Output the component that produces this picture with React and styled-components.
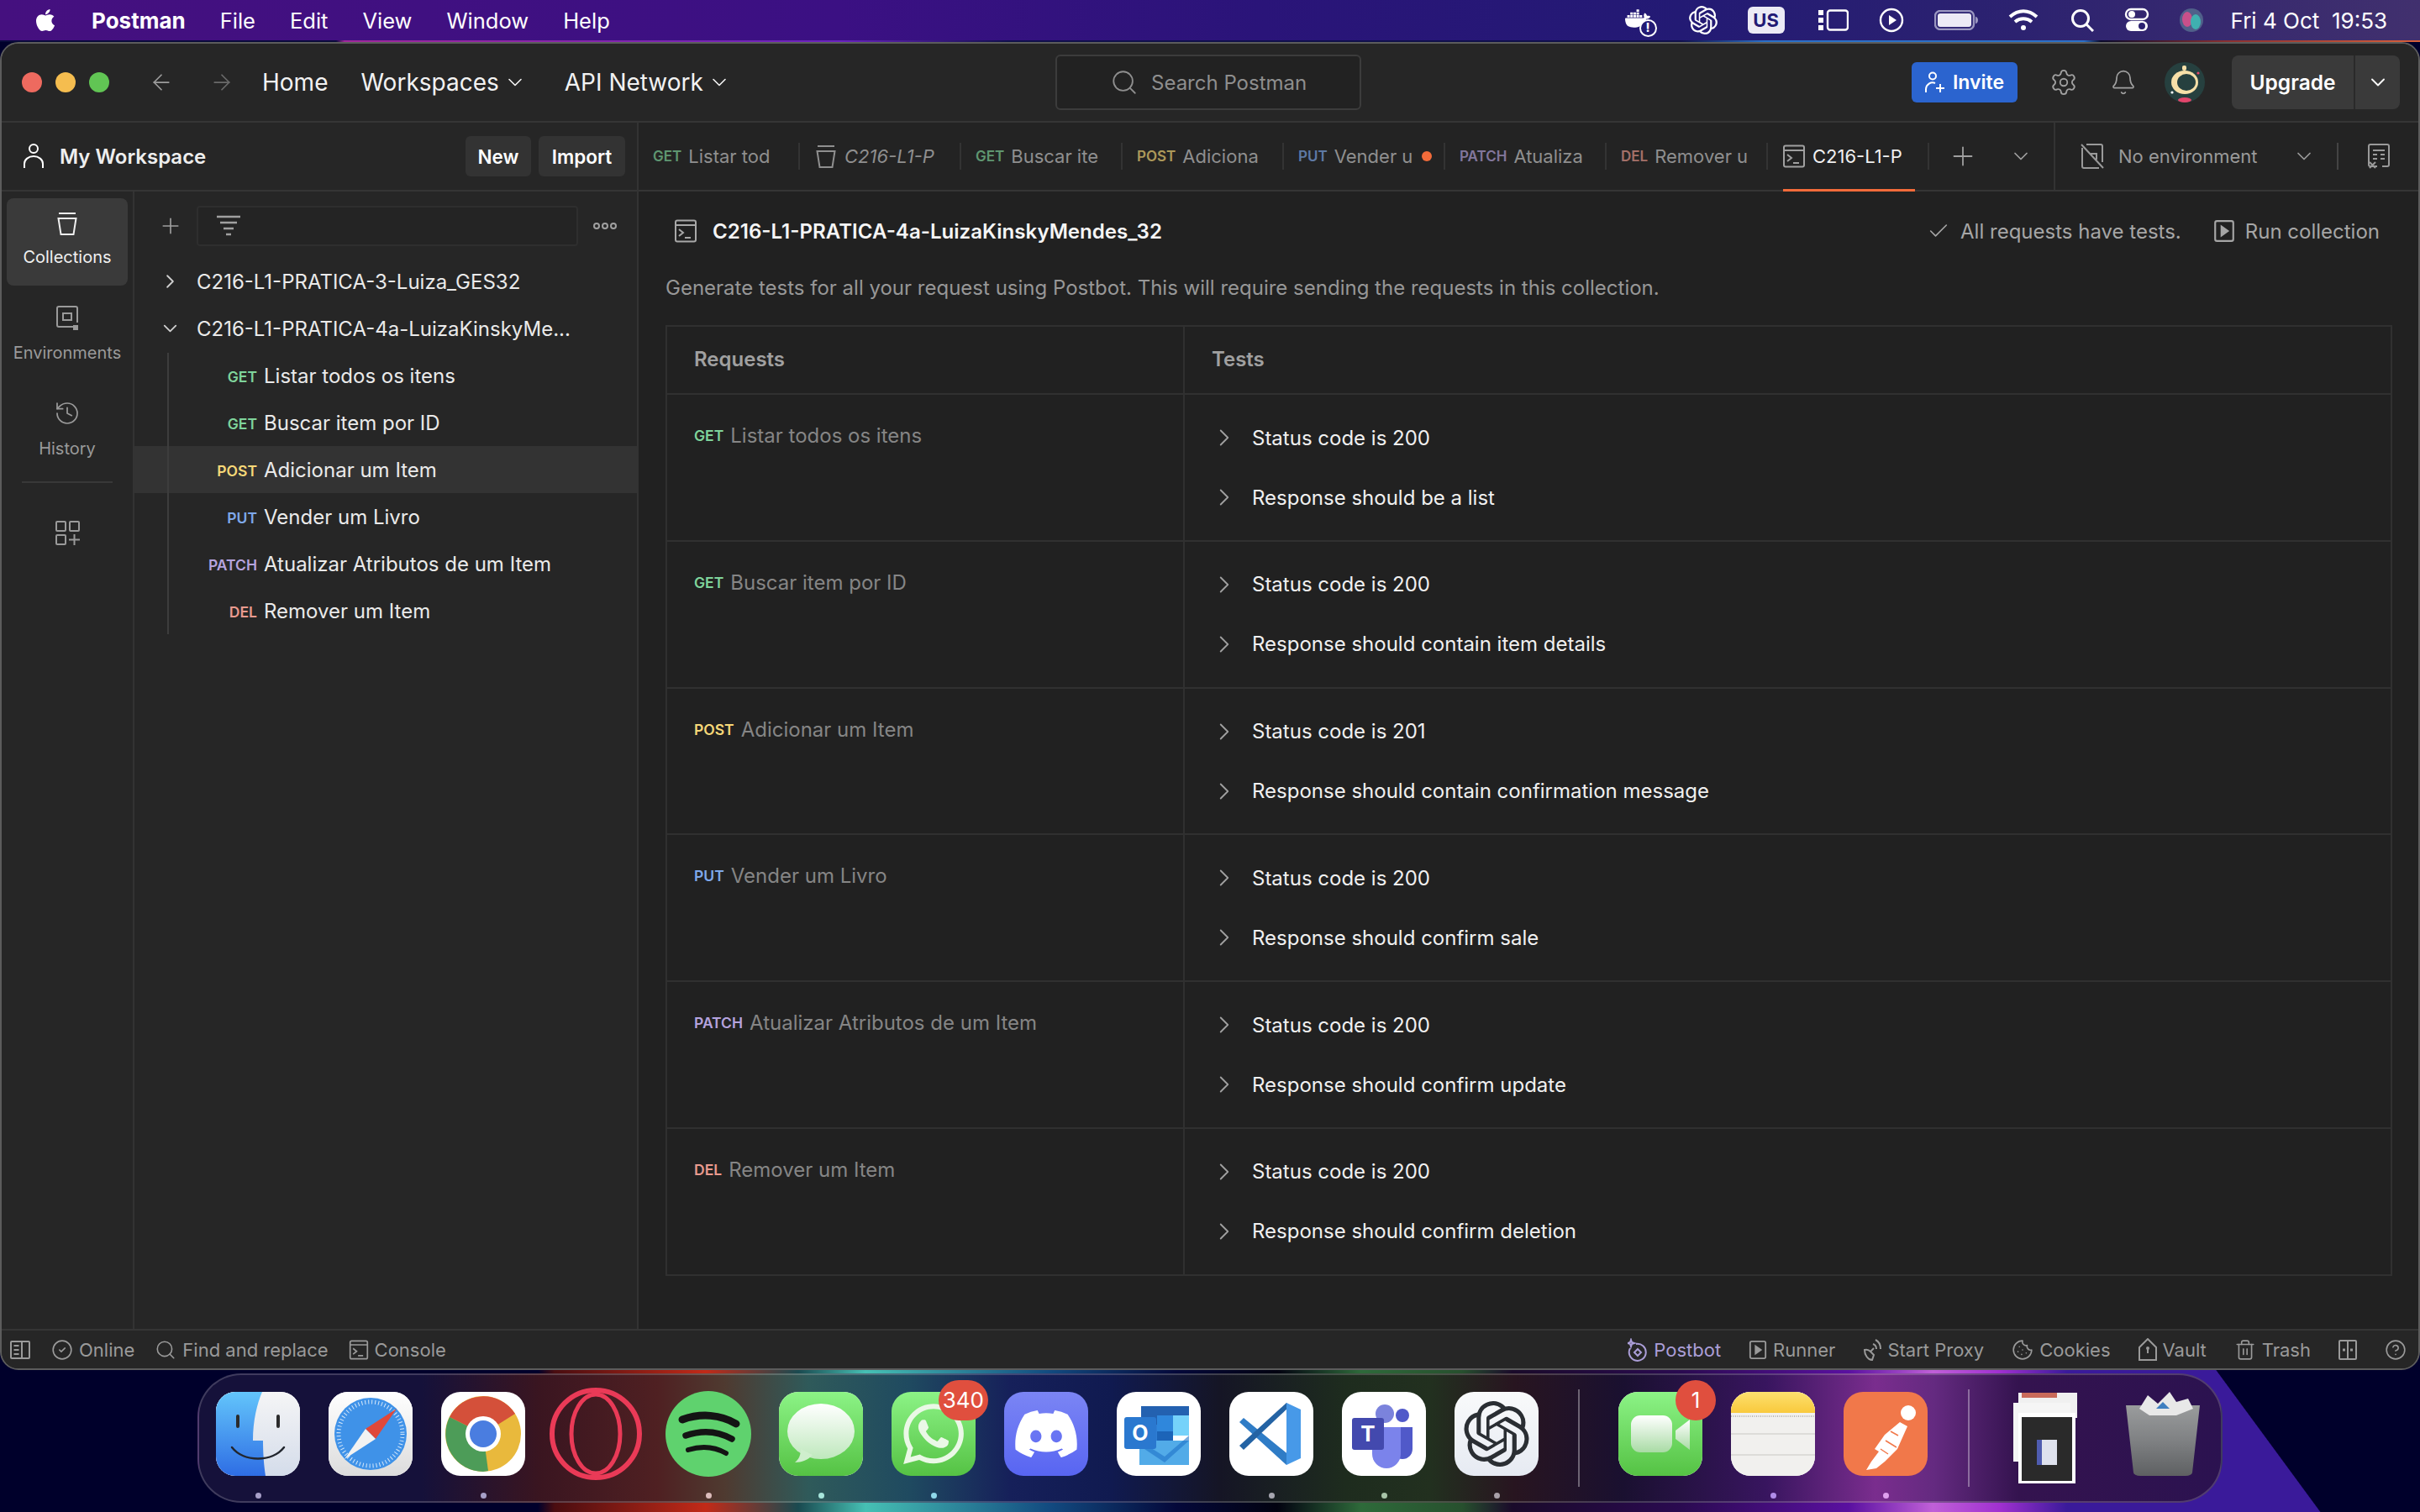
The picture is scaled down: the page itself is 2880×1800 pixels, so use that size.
import styled, { createGlobalStyle } from "styled-components";
import {
  ArrowLeft, ArrowRight, Bell, Check, ChevronDown, ChevronRight, CircleCheck, CircleHelp,
  Cookie, History, Plus, Search, Settings, Trash2,
} from "lucide-react";
import { FaApple, FaDiscord, FaWhatsapp } from "react-icons/fa";
import { SiDocker, SiOpenai } from "react-icons/si";

const GlobalStyle = createGlobalStyle`
  * { box-sizing: border-box; }
  html, body { margin: 0; padding: 0; }
  body { width: 2880px; height: 1800px; overflow: hidden; font-family: Inter, "Liberation Sans", sans-serif; }
`;

const Screen = styled.div`
  width: 2880px;
  height: 1800px;
  display: flex;
  flex-direction: column;
  overflow: hidden;
  background:
    linear-gradient(53.7deg, transparent 2225px, #00002b 2226px),
    linear-gradient(to right, #00002b 0, #00002b 640px, #4a0d10 660px, #c22a18 840px, #1a4a50 950px,
      #46c0b4 1030px, #124a80 1250px, #04083a 1400px, #020210 1520px, #2e6a3a 1620px, #27502e 1740px,
      #1a0a2a 1800px, #2a0a50 2000px, #5a10a0 2200px, #c060d8 2300px, #a030d0 2380px, #3a1a9a 2460px, #3a1a9a 2880px);
`;

const MenuBar = styled.div`
  height: 48px;
  flex: none;
  display: flex;
  align-items: center;
  padding: 0 39px 0 39px;
  color: #fff;
  font-size: 25.5px;
  background: linear-gradient(to right, #45107f 0, #3b1083 1000px, #2a1479 1500px, #231a74 2000px, #2c2270 2400px, #41306e 2880px);
`;

const MenuLeft = styled.div`
  display: flex;
  align-items: center;
  gap: 41px;
`;

const AppName = styled.span`
  font-weight: 700;
  margin-left: -1px;
  font-size: 26px;
`;

const MenuRight = styled.div`
  margin-left: auto;
  display: flex;
  align-items: center;
  height: 100%;
`;

const KeyboardBadge = styled.span`
  width: 44px;
  height: 32px;
  margin: 0 40px 0 36px;
  border-radius: 6px;
  background: #eceaf5;
  color: #231a74;
  font-size: 22px;
  font-weight: 700;
  display: flex;
  align-items: center;
  justify-content: center;
`;

const Clock = styled.span`
  margin-left: 33px;
  font-size: 26px;
  white-space: pre;
`;

const TrayIcon = styled.svg`
  flex: none;
  margin-left: ${(p) => p.$left || 0}px;
  fill: none;
  stroke: #fff;
  stroke-width: 2.4;
  display: block;
`;

const DockerBox = styled.div`
  position: relative;
  width: 38px;
  height: 34px;
  flex: none;
`;

const DockerAlert = styled.span`
  position: absolute;
  right: 0;
  bottom: -3px;
  width: 21px;
  height: 21px;
  border-radius: 50%;
  border: 2.5px solid #fff;
  background: #231a74;
  font-size: 14px;
  line-height: 16px;
  font-weight: 800;
  text-align: center;
`;

const Strip = styled.div`
  height: 2px;
  flex: none;
  background: linear-gradient(to right, #0a0a3a 0, #0a0a3a 400px, #a0289a 410px, #6a22c0 1000px, #10104a 1200px, #10104a 2000px, #2a70c8 2100px, #2a70c8 2480px, #0a0a2a 2500px, #8a3030 2650px, #d8603a 2880px);
`;

const AppWindow = styled.div`
  height: 1581px;
  flex: none;
  display: flex;
  flex-direction: column;
  border: 2px solid #5c5c5c;
  border-radius: 22px;
  background: #262626;
  overflow: hidden;
  color: #fff;
`;

const TopBar = styled.header`
  height: 94px;
  flex: none;
  display: grid;
  grid-template-columns: 1254px 364px 1fr;
  align-items: center;
  background: #262626;
  border-bottom: 2px solid #353535;
`;

const NavGroup = styled.div`
  display: flex;
  align-items: center;
  padding-left: 24px;
`;

const Light = styled.span`
  width: 24px;
  height: 24px;
  border-radius: 50%;
  margin-right: 16px;
  background: ${(p) => p.$color};
`;

const NavArrow = styled.span`
  display: flex;
  margin-left: ${(p) => p.$left}px;
  color: ${(p) => p.$color};
`;

const NavLink = styled.span`
  display: flex;
  align-items: center;
  gap: 5px;
  margin-left: ${(p) => p.$left}px;
  font-size: 28px;
  color: #f2f2f2;
  white-space: nowrap;
`;

const SearchBox = styled.div`
  height: 66px;
  display: flex;
  align-items: center;
  gap: 15px;
  padding-left: 63px;
  border: 2px solid #3c3c3c;
  border-radius: 6px;
  background: #222;
  color: #8e8e8e;
  font-size: 24px;
`;

const TopActions = styled.div`
  display: flex;
  align-items: center;
  justify-content: flex-end;
  padding-right: 22px;
  color: #a0a0a0;
`;

const InviteButton = styled.button`
  width: 126px;
  height: 48px;
  padding: 0;
  border: 0;
  border-radius: 6px;
  background: #2b64cf;
  color: #fff;
  font: 600 23px Inter, sans-serif;
  display: flex;
  align-items: center;
  justify-content: center;
  gap: 9px;
`;

const ActionIcon = styled.span`
  display: flex;
  margin-left: ${(p) => p.$left}px;
`;

const Avatar = styled.svg`
  width: 48px;
  height: 48px;
  margin-left: 33px;
  flex: none;
`;

const UpgradeButton = styled.div`
  width: 200px;
  height: 64px;
  margin-left: 32px;
  border-radius: 8px;
  background: #3a3a3a;
  display: grid;
  grid-template-columns: 147px 1fr;
  color: #fff;
  font-size: 24.5px;
  font-weight: 600;
`;

const UpgradeLabel = styled.span`
  display: flex;
  align-items: center;
  justify-content: center;
  border-right: 2px solid #2a2a2a;
`;

const UpgradeCaret = styled.span`
  display: flex;
  align-items: center;
  justify-content: center;
`;

const Workbench = styled.div`
  flex: 1;
  min-height: 0;
  display: flex;
`;

const Sidebar = styled.aside`
  width: 758px;
  flex: none;
  display: flex;
  flex-direction: column;
  border-right: 2px solid #333;
  background: #262626;
`;

const SidebarHeader = styled.div`
  height: 82px;
  flex: none;
  display: flex;
  align-items: center;
  padding: 0 14px 0 26px;
  border-bottom: 2px solid #353535;
  gap: 9px;
`;

const WorkspaceName = styled.span`
  margin-left: 10px;
  margin-right: auto;
  font-size: 24px;
  font-weight: 600;
  color: #eee;
`;

const HeaderButton = styled.button`
  height: 48px;
  width: ${(p) => p.$width}px;
  padding: 0;
  border: 0;
  border-radius: 6px;
  background: #333;
  color: #fff;
  font: 600 22.5px Inter, sans-serif;
`;

const SidebarBody = styled.div`
  flex: 1;
  min-height: 0;
  display: flex;
`;

const Rail = styled.nav`
  width: 158px;
  flex: none;
  display: flex;
  flex-direction: column;
  padding: 8px 6px 0;
  border-right: 2px solid #333;
`;

const RailItem = styled.div`
  height: 104px;
  margin-bottom: 8px;
  display: flex;
  flex-direction: column;
  align-items: center;
  padding-top: 16px;
  gap: 14px;
  border-radius: 8px;
  background: ${(p) => (p.$active ? "#3a3a3a" : "transparent")};
  color: ${(p) => (p.$active ? "#f0f0f0" : "#9a9a9a")};
  font-size: 20px;
`;

const RailDivider = styled.div`
  height: 2px;
  margin: 1px 18px 44px;
  background: #383838;
`;

const RailGrid = styled.div`
  display: flex;
  justify-content: center;
  color: #9a9a9a;
`;

const TreePanel = styled.div`
  flex: 1;
  min-width: 0;
  display: flex;
  flex-direction: column;
`;

const TreeTools = styled.div`
  height: 62px;
  margin-top: 10px;
  margin-bottom: 7px;
  display: flex;
  align-items: center;
  padding-left: 28px;
  color: #a0a0a0;
`;

const FilterBox = styled.div`
  width: 454px;
  height: 48px;
  margin-left: 16px;
  padding-left: 22px;
  display: flex;
  align-items: center;
  border: 2px solid #2e2e2e;
  border-radius: 4px;
  background: #242424;
`;

const MoreDots = styled.span`
  margin-left: 18px;
  display: flex;
  gap: 2px;
`;

const MoreDot = styled.i`
  width: 8px;
  height: 8px;
  border-radius: 50%;
  border: 2px solid #a0a0a0;
`;

const CollectionRow = styled.div`
  height: 56px;
  padding-left: 29px;
  display: flex;
  align-items: center;
  gap: 18px;
  font-size: 24px;
  color: #eaeaea;
  white-space: nowrap;
`;

const RowCaret = styled.span`
  width: 27px;
  display: flex;
  justify-content: center;
  color: #cfcfcf;
`;

const TreeChildren = styled.div`
  position: relative;

  &::before {
    content: "";
    position: absolute;
    left: 39px;
    top: 1px;
    bottom: 0;
    width: 2px;
    background: #3d3d3d;
  }
`;

const RequestRow = styled.div`
  height: 56px;
  display: flex;
  align-items: center;
  background: ${(p) => (p.$selected ? "#333" : "transparent")};
  font-size: 24px;
  color: #eaeaea;
`;

const RowMethodSlot = styled.span`
  width: 146px;
  flex: none;
  text-align: right;
  margin-right: 8px;
  line-height: 1;
`;

const Method = styled.span`
  font-size: ${(p) => p.$size || 17.5}px;
  font-weight: 600;
  color: ${(p) => p.$color};
  opacity: ${(p) => (p.$dim ? 0.65 : 1)};
  flex: none;
`;

const Main = styled.main`
  flex: 1;
  min-width: 0;
  display: flex;
  flex-direction: column;
  background: #212121;
`;

const TabBar = styled.div`
  height: 82px;
  flex: none;
  display: flex;
  align-items: center;
  border-bottom: 2px solid #353535;
  background: #232323;
`;

const Tab = styled.div`
  position: relative;
  width: 192px;
  flex: none;
  height: 100%;
  display: flex;
  align-items: center;
`;

const TabInner = styled.div`
  width: 100%;
  height: 32px;
  padding: 0 24px 0 17px;
  display: flex;
  align-items: center;
  gap: 8px;
  overflow: hidden;
  border-right: 2px solid #333;
`;

const TabText = styled.span`
  white-space: nowrap;
  font-size: 22px;
  font-style: ${(p) => (p.$italic ? "italic" : "normal")};
  color: ${(p) => (p.$active ? "#f0f0f0" : "#8f8f8f")};
`;

const TabDot = styled.span`
  position: absolute;
  right: 16px;
  top: 34px;
  width: 12px;
  height: 12px;
  border-radius: 50%;
  background: #f26b3a;
`;

const TabUnderline = styled.span`
  position: absolute;
  left: 18px;
  right: 17px;
  bottom: -2px;
  height: 3px;
  background: #f26b3a;
`;

const TabTool = styled.span`
  display: flex;
  margin-left: ${(p) => p.$left}px;
  color: #a0a0a0;
`;

const EnvSection = styled.div`
  height: 100%;
  margin-left: 25px;
  flex: 1;
  padding-left: 30px;
  display: flex;
  align-items: center;
  border-left: 2px solid #333;
  color: #9a9a9a;
  font-size: 22px;
`;

const EnvLabel = styled.span`
  margin-left: 17px;
  width: 207px;
`;

const EnvDivider = styled.span`
  width: 2px;
  height: 32px;
  margin: 0 34px 0 25px;
  background: #444;
`;

const Content = styled.section`
  flex: 1;
  min-height: 0;
  padding: 29px 31px 0 32px;
`;

const TitleRow = styled.div`
  height: 36px;
  display: flex;
  align-items: center;
  padding-left: 10px;
`;

const CollectionTitle = styled.h1`
  margin: 0 0 0 18px;
  font-size: 24.1px;
  font-weight: 600;
  color: #f5f5f5;
`;

const TitleActions = styled.div`
  margin-left: auto;
  padding-right: 15px;
  display: flex;
  align-items: center;
  color: #a6a6a6;
  font-size: 24px;
`;

const TitleAction = styled.span`
  display: flex;
  align-items: center;
  gap: 12px;
  margin-left: 38px;
`;

const Description = styled.p`
  margin: 32px 0 26px;
  line-height: 36px;
  font-size: 24px;
  color: #979797;
`;

const TestsTable = styled.div`
  border: 2px solid #303030;
  border-bottom-width: 0;
`;

const TableRow = styled.div`
  display: grid;
  grid-template-columns: 616px 1fr;
  height: ${(p) => (p.$head ? 81 : 174.8)}px;
  border-bottom: 2px solid #303030;
`;

const RequestCell = styled.div`
  padding: ${(p) => (p.$head ? "23px 0 0 32px" : "33px 0 0 32px")};
  border-right: 2px solid #303030;
  display: flex;
  align-items: flex-start;
  gap: 8px;
  line-height: 32px;
  font-size: 24px;
  color: ${(p) => (p.$head ? "#a0a0a0" : "#858585")};
  font-weight: ${(p) => (p.$head ? 600 : 400)};
`;

const HeadCell = styled.div`
  padding: 23px 0 0 32px;
  line-height: 32px;
  font-size: 24px;
  font-weight: 600;
  color: #a0a0a0;
`;

const TestCell = styled.div`
  padding: 33px 0 0 30px;
  display: flex;
  flex-direction: column;
  gap: 35px;
`;

const TestLine = styled.div`
  height: 36px;
  display: flex;
  align-items: center;
  gap: 16px;
  font-size: 24px;
  color: #f0f0f0;

  svg { color: #a0a0a0; flex: none; }
`;

const StatusBar = styled.footer`
  height: 47px;
  flex: none;
  display: flex;
  align-items: center;
  justify-content: space-between;
  padding: 0 14px 0 10px;
  border-top: 2px solid #353535;
  background: #262626;
  color: #9a9a9a;
  font-size: 22px;
`;

const StatusGroup = styled.div`
  display: flex;
  align-items: center;
  gap: ${(p) => p.$gap}px;
`;

const StatusItem = styled.span`
  display: flex;
  align-items: center;
  gap: 7px;
  color: ${(p) => p.$color || "inherit"};
`;

const Dock = styled.div`
  width: 2410px;
  height: 154px;
  margin: 4px 0 0 235px;
  flex: none;
  padding: 20px 0 0 20px;
  display: flex;
  border: 2px solid rgba(255, 255, 255, 0.18);
  border-radius: 52px;
  background: linear-gradient(to right, #15113a 0, #15113a 265px, #3a1520 405px, #4f2022 545px, #4f3a30 625px,
    #2f5a5a 725px, #1f4a60 845px, #16205a 965px, #101a50 1085px, #151525 1215px, #1e2c1e 1365px, #22301f 1465px,
    #281520 1565px, #1a1030 1695px, #38155f 1865px, #7a2d8e 1995px, #642a80 2065px, #34134f 2165px, #2b1250 2410px);
`;

const DockSlot = styled.div`
  position: relative;
  width: 100px;
  flex: none;
  margin-right: ${(p) => (p.$last ? 0 : 34)}px;
`;

const DockTile = styled.div`
  width: 100px;
  height: 100px;
  border-radius: 23px;
  overflow: ${(p) => (p.$open ? "visible" : "hidden")};
  display: flex;
  align-items: center;
  justify-content: center;
  background: ${(p) => p.$bg || "#fff"};
  color: ${(p) => p.$fg || "#fff"};
`;

const DockArt = styled.svg`
  width: 100px;
  height: 100px;
  display: block;
  overflow: visible;
`;

const RunDot = styled.i`
  display: block;
  width: 7px;
  height: 7px;
  margin: 20px auto 0;
  border-radius: 50%;
  background: ${(p) => p.$color};
`;

const DockBadge = styled.span`
  position: absolute;
  top: -14px;
  right: ${(p) => p.$right}px;
  min-width: 48px;
  height: 48px;
  padding: 0 5px;
  border-radius: 24px;
  background: #e04f3e;
  color: #fff;
  font-size: 26px;
  line-height: 48px;
  text-align: center;
`;

const DockDivider = styled.i`
  width: 2px;
  height: 116px;
  flex: none;
  margin: -3px ${(p) => p.$right}px 0 ${(p) => p.$left}px;
  background: rgba(255, 255, 255, 0.35);
`;

const Glyph = styled.svg`
  display: block;
  flex: none;
  fill: none;
  stroke: currentColor;
  stroke-width: ${(p) => p.$stroke || 2};
`;

const METHOD_COLORS = {
  GET: "#7fd49b",
  POST: "#f6d878",
  PUT: "#7ea8ea",
  PATCH: "#b5a3de",
  DEL: "#e99a8e",
};

const REQUESTS = [
  { method: "GET", name: "Listar todos os itens", tests: ["Status code is 200", "Response should be a list"] },
  { method: "GET", name: "Buscar item por ID", tests: ["Status code is 200", "Response should contain item details"] },
  { method: "POST", name: "Adicionar um Item", tests: ["Status code is 201", "Response should contain confirmation message"] },
  { method: "PUT", name: "Vender um Livro", tests: ["Status code is 200", "Response should confirm sale"] },
  { method: "PATCH", name: "Atualizar Atributos de um Item", tests: ["Status code is 200", "Response should confirm update"] },
  { method: "DEL", name: "Remover um Item", tests: ["Status code is 200", "Response should confirm deletion"] },
];

const TABS = [
  { method: "GET", name: "Listar tod" },
  { icon: true, name: "C216-L1-P", italic: true },
  { method: "GET", name: "Buscar ite" },
  { method: "POST", name: "Adiciona" },
  { method: "PUT", name: "Vender u", dirty: true },
  { method: "PATCH", name: "Atualiza" },
  { method: "DEL", name: "Remover u" },
];

const BucketIcon = ({ size = 28 }) => (
  <Glyph width={size} height={size} viewBox="0 0 28 28" $stroke={2}>
    <path d="M4 2h20M3.5 8h21l-3 19H6.5z" />
  </Glyph>
);

const ConsoleIcon = ({ w = 28, h = 28, color }) => (
  <Glyph width={w} height={h} viewBox="0 0 28 28" $stroke={2} style={color ? { color } : undefined}>
    <rect x="2" y="1.5" width="24" height="25" rx="2" />
    <path d="M2 7h24M6 12l5 4-5 4M13 22h7" />
  </Glyph>
);

const EnvIcon = () => (
  <Glyph width={28} height={30} viewBox="0 0 28 30">
    <path d="M22 25H4a2 2 0 0 1-2-2V3a2 2 0 0 1 2-2h20a2 2 0 0 1 2 2v17" />
    <rect x="9" y="9" width="10" height="8" />
    <rect x="21" y="23" width="6" height="6" fill="currentColor" stroke="none" />
  </Glyph>
);

const AddAppIcon = () => (
  <Glyph width={30} height={30} viewBox="0 0 30 30">
    <rect x="2" y="2" width="11" height="11" rx="1" />
    <rect x="18" y="2" width="11" height="11" rx="1" />
    <rect x="2" y="18" width="11" height="11" rx="1" />
    <path d="M23.5 17v13M17 23.5h13" />
  </Glyph>
);

const FilterIcon = () => (
  <Glyph width={28} height={26} viewBox="0 0 28 26" $stroke={2.5}>
    <path d="M0 2h28M4 9h20M8 16h12M11 23h6" />
  </Glyph>
);

const NoEnvIcon = () => (
  <Glyph width={28} height={30} viewBox="0 0 28 30">
    <path d="M2 5v22a2 2 0 0 0 2 2h18M7 1h17a2 2 0 0 1 2 2v19" />
    <path d="M1 1l26 28M12 12h7v7" />
  </Glyph>
);

const CalcIcon = () => (
  <Glyph width={28} height={30} viewBox="0 0 28 30">
    <path d="M12 27H4a2 2 0 0 1-2-2V3a2 2 0 0 1 2-2h20a2 2 0 0 1 2 2v22a2 2 0 0 1-2 2h-6" />
    <path d="M7 8h14M7 13h5M16 13h5M7 18h5M16 18h5M3 22l7 7M10 22l-7 7" />
  </Glyph>
);

const PanelIcon = () => (
  <Glyph width={24} height={24} viewBox="0 0 24 24">
    <rect x="1" y="2" width="22" height="20" rx="1" />
    <path d="M14 2v20M4.5 7h6M4.5 12h6M4.5 17h6" />
  </Glyph>
);

const RunIcon = ({ size = 24 }) => (
  <Glyph width={size} height={size + 2} viewBox="0 0 24 26">
    <rect x="2" y="2" width="20" height="22" rx="2" />
    <path d="M9 8l7 5-7 5z" fill="currentColor" />
  </Glyph>
);

const PostbotIcon = () => (
  <Glyph width={24} height={28} viewBox="0 0 24 28">
    <path d="M3 12a10 10 0 1 0 7-5M4 2l1 3 3 1-3 1-1 3-1-3-3-1 3-1z" />
    <path d="M12 13l4 4-4 4-4-4z" />
  </Glyph>
);

const ProxyIcon = () => (
  <Glyph width={22} height={28} viewBox="0 0 22 28">
    <path d="M2 14a7 7 0 0 1 7 2l4 4-2 6c-5 0-9-6-9-12zM9 16l4-4M12 7c3 1 4 3 4 6M15 2c4 2 6 5 6 11" />
  </Glyph>
);

const VaultIcon = () => (
  <Glyph width={22} height={28} viewBox="0 0 22 28">
    <path d="M1 11L11 1l10 10v15H1zM11 13v5" />
    <circle cx="11" cy="12" r="1" />
  </Glyph>
);

const SplitIcon = () => (
  <Glyph width={22} height={24} viewBox="0 0 22 24">
    <rect x="1" y="1" width="20" height="22" rx="1" />
    <path d="M11 1v22" />
    <path d="M5 12h3M14 12h3" strokeWidth="3" />
  </Glyph>
);

const UserIcon = () => (
  <Glyph width={24} height={30} viewBox="0 0 24 30" $stroke={2}>
    <circle cx="12" cy="6" r="5" />
    <path d="M1 29v-5a11 9 0 0 1 22 0v5" />
  </Glyph>
);

const InviteIcon = () => (
  <Glyph width={24} height={26} viewBox="0 0 24 26" $stroke={2}>
    <circle cx="9" cy="5.5" r="4" />
    <path d="M1 25v-4a8 8 0 0 1 11-7M18 15v10M13 20h10" />
  </Glyph>
);

const AppleIcon = () => <FaApple size={30} style={{ display: "block" }} />;

const AvatarArt = () => (
  <Avatar viewBox="0 0 48 48">
    <circle cx="24" cy="24" r="24" fill="#26403f" />
    <ellipse cx="24" cy="24" rx="16" ry="14" fill="#f6dfa8" />
    <ellipse cx="26" cy="24" rx="11" ry="10" fill="#26403f" />
    <rect x="21" y="4" width="5" height="6" rx="2" fill="#f6dfa8" />
    <ellipse cx="24" cy="45" rx="8" ry="3" fill="#e2456b" />
    <circle cx="40" cy="13" r="1.6" fill="#e2456b" />
    <circle cx="9" cy="36" r="1.6" fill="#fff" />
  </Avatar>
);

const FinderArt = () => (
  <DockArt viewBox="0 0 100 100">
    <defs>
      <linearGradient id="finderL" x1="0" y1="0" x2="0" y2="1"><stop offset="0" stopColor="#63c5fb" /><stop offset="1" stopColor="#2e6de4" /></linearGradient>
      <linearGradient id="finderR" x1="0" y1="0" x2="0" y2="1"><stop offset="0" stopColor="#f5f5f6" /><stop offset="1" stopColor="#d4dcea" /></linearGradient>
    </defs>
    <rect width="100" height="100" fill="url(#finderR)" />
    <path d="M0 0h55c-6 14-11 34-11 58h12c0 14 1 30 3 42H0z" fill="url(#finderL)" />
    <path d="M26 29v12M74 29v12" stroke="#2b2b2b" strokeWidth="4" strokeLinecap="round" />
    <path d="M19 66c14 18 48 18 62 0" fill="none" stroke="#22262e" strokeWidth="2.5" strokeLinecap="round" />
  </DockArt>
);

const SafariArt = () => (
  <DockArt viewBox="0 0 100 100">
    <defs>
      <linearGradient id="safariBase" x1="0" y1="0" x2="0" y2="1"><stop offset="0" stopColor="#fff" /><stop offset="1" stopColor="#dcdcdc" /></linearGradient>
    </defs>
    <rect width="100" height="100" fill="url(#safariBase)" />
    <circle cx="50" cy="50" r="43" fill="#3f92e8" />
    <circle cx="50" cy="50" r="38" fill="none" stroke="#d6e8fa" strokeWidth="5" strokeDasharray="1 3" />
    <path d="M81 20L44 44l12 12z" fill="#e0483a" />
    <path d="M19 80l25-36 12 12z" fill="#f2f2f2" />
  </DockArt>
);

const ChromeArt = () => (
  <DockArt viewBox="0 0 100 100">
    <circle cx="50" cy="50" r="45" fill="#e9b93c" />
    <path d="M50 50L10 30A45 45 0 0 1 88 26z" fill="#d4503a" />
    <path d="M50 50L10 30A45 45 0 0 0 50 95z" fill="#4d9c58" />
    <path d="M50 50L50 95 A45 45 0 0 0 56 94z" fill="#4d9c58" />
    <circle cx="50" cy="50" r="21" fill="#fff" />
    <circle cx="50" cy="50" r="16" fill="#4a7de0" />
  </DockArt>
);

const OperaArt = () => (
  <DockArt viewBox="0 0 100 100">
    <circle cx="50" cy="50" r="52" fill="none" stroke="#ea3a57" strokeWidth="6" />
    <ellipse cx="50" cy="50" rx="29" ry="47" fill="none" stroke="#ea3a57" strokeWidth="5" />
  </DockArt>
);

const SpotifyArt = () => (
  <DockArt viewBox="0 0 100 100">
    <circle cx="50" cy="50" r="51" fill="#5fd26e" />
    <path d="M19 33c22-8 46-6 64 5" fill="none" stroke="#141414" strokeWidth="9" strokeLinecap="round" />
    <path d="M23 52c20-7 39-5 55 4" fill="none" stroke="#141414" strokeWidth="7.5" strokeLinecap="round" />
    <path d="M26 69c16-5 31-4 45 4" fill="none" stroke="#141414" strokeWidth="6" strokeLinecap="round" />
  </DockArt>
);

const MessagesArt = () => (
  <DockArt viewBox="0 0 100 100">
    <defs>
      <linearGradient id="msgBg" x1="0" y1="0" x2="0" y2="1"><stop offset="0" stopColor="#8cf386" /><stop offset="1" stopColor="#55c244" /></linearGradient>
      <linearGradient id="msgFg" x1="0" y1="0" x2="0" y2="1"><stop offset="0" stopColor="#fff" /><stop offset="1" stopColor="#bfe8bd" /></linearGradient>
    </defs>
    <rect width="100" height="100" fill="url(#msgBg)" />
    <ellipse cx="50" cy="47" rx="40" ry="33" fill="url(#msgFg)" />
    <path d="M26 68c0 8-3 13-7 16 8 0 16-3 21-9z" fill="#cfeecd" />
  </DockArt>
);

const OutlookArt = () => (
  <DockArt viewBox="0 0 100 100">
    <rect x="29" y="17" width="57" height="22" fill="#2361b0" />
    <rect x="29" y="39" width="19" height="19" fill="#2f7ed4" />
    <rect x="48" y="28" width="19" height="19" fill="#2f87dc" />
    <rect x="67" y="28" width="19" height="24" fill="#75d2fa" />
    <rect x="48" y="47" width="19" height="19" fill="#1c64b8" />
    <path d="M27 58h59v29H27z" fill="#52abe8" />
    <path d="M27 58l30 19 29-25v6L57 84 27 64z" fill="#1f73c8" opacity=".6" />
    <rect x="9" y="30" width="38" height="38" rx="3" fill="#2a78cf" />
    <text x="28" y="58" textAnchor="middle" fontSize="25" fontWeight="700" fontFamily="Inter, sans-serif" fill="#fff">O</text>
  </DockArt>
);

const VsCodeArt = () => (
  <DockArt viewBox="0 0 100 100">
    <path d="M12 36l5-5 55 45-4 11z" fill="#2f7cc6" />
    <path d="M12 64l5 5 55-52-4-4z" fill="#2463a4" />
    <path d="M68 13l17 8v58l-17 8z" fill="#4799e8" />
  </DockArt>
);

const TeamsArt = () => (
  <DockArt viewBox="0 0 100 100">
    <circle cx="51" cy="26" r="11" fill="#7b83dc" />
    <circle cx="72" cy="28" r="8" fill="#5059c9" />
    <path d="M62 42h22v26a12 12 0 0 1-24 0z" fill="#5059c9" />
    <path d="M36 42h34v32a17 17 0 0 1-34 0z" fill="#7b83eb" />
    <rect x="12" y="31" width="38" height="38" rx="3" fill="#4349ae" />
    <text x="31" y="59" textAnchor="middle" fontSize="26" fontWeight="700" fontFamily="Inter, sans-serif" fill="#fff">T</text>
  </DockArt>
);

const FaceTimeArt = () => (
  <DockArt viewBox="0 0 100 100">
    <defs>
      <linearGradient id="ftBg" x1="0" y1="0" x2="0" y2="1"><stop offset="0" stopColor="#8cf386" /><stop offset="1" stopColor="#55c244" /></linearGradient>
      <linearGradient id="ftFg" x1="0" y1="0" x2="0" y2="1"><stop offset="0" stopColor="#fff" /><stop offset="1" stopColor="#a9dba5" /></linearGradient>
    </defs>
    <rect width="100" height="100" fill="url(#ftBg)" />
    <rect x="15" y="28" width="49" height="44" rx="11" fill="url(#ftFg)" />
    <path d="M68 46l17-13v36L68 56z" fill="url(#ftFg)" />
  </DockArt>
);

const NotesArt = () => (
  <DockArt viewBox="0 0 100 100">
    <defs>
      <linearGradient id="noteTop" x1="0" y1="0" x2="0" y2="1"><stop offset="0" stopColor="#fde06f" /><stop offset="1" stopColor="#f9c93c" /></linearGradient>
    </defs>
    <rect width="100" height="100" fill="#f1f0ee" />
    <rect width="100" height="25" fill="url(#noteTop)" />
    <path d="M0 29h100" stroke="#b9b7b2" strokeWidth="2" strokeDasharray="1 1.5" />
    <path d="M0 50h100M0 75h100" stroke="#d6d5d2" strokeWidth="1.5" />
  </DockArt>
);

const PostmanArt = () => (
  <DockArt viewBox="0 0 100 100">
    <circle cx="77" cy="25" r="9" fill="#fff" />
    <path d="M67 36l9 5-12 27-15 15-10 8-12 2 6-10 9-12-5-3 12-17z" fill="#fff" />
    <path d="M50 58l13 8M56 47l9 5M44 68l9 6" stroke="#f1784a" strokeWidth="1.5" fill="none" />
  </DockArt>
);

const FileStackArt = () => (
  <DockArt viewBox="0 0 100 100" style={{ height: 118, marginTop: -10 }}>
    <rect x="12" y="2" width="70" height="30" fill="#f0f0f0" />
    <rect x="16" y="2" width="42" height="6" fill="#c96a5a" />
    <rect x="6" y="14" width="68" height="70" fill="#f5f5f5" />
    <rect x="12" y="26" width="68" height="84" fill="#fff" />
    <rect x="16" y="31" width="60" height="76" fill="#2a2a2a" />
    <rect x="34" y="58" width="24" height="30" fill="#dfe2ee" />
    <rect x="34" y="58" width="6" height="30" fill="#4f5cb0" />
  </DockArt>
);

const TrashArt = () => (
  <DockArt viewBox="0 0 100 100" style={{ height: 116, marginTop: -8 }}>
    <defs>
      <linearGradient id="binBg" x1="0" y1="0" x2="0" y2="1"><stop offset="0" stopColor="#9a9c9d" /><stop offset="0.5" stopColor="#7f8183" /><stop offset="1" stopColor="#5e6062" /></linearGradient>
    </defs>
    <path d="M6 16h88l-9 80a8 4 0 0 1-8 4H23a8 4 0 0 1-8-4z" fill="url(#binBg)" />
    <path d="M22 20l10-16 12 10 14-14 8 12 14-4 6 12-20 8H34z" fill="#e8e8e8" />
    <path d="M42 20l8-8 8 8z" fill="#3f7fc0" />
  </DockArt>
);

const DOCK_APPS = [
  { key: "finder", art: <FinderArt />, dot: "#a79fc8" },
  { key: "safari", art: <SafariArt />, bg: "#fff" },
  { key: "chrome", art: <ChromeArt />, dot: "#a79fc8" },
  { key: "opera", art: <OperaArt />, bg: "transparent", open: true },
  { key: "spotify", art: <SpotifyArt />, bg: "transparent", open: true, dot: "#dcbcbc" },
  { key: "messages", art: <MessagesArt />, dot: "#a7e6dc" },
  {
    key: "whatsapp",
    art: <FaWhatsapp size={82} />,
    bg: "linear-gradient(#8cf386, #55c244)",
    fg: "#eaf8e6",
    badge: "340",
    badgeRight: -15,
    dot: "#8fd8ea",
  },
  { key: "discord", art: <FaDiscord size={80} />, bg: "linear-gradient(#7b85f4, #5865f2)", fg: "#fff" },
  { key: "outlook", art: <OutlookArt /> },
  { key: "vscode", art: <VsCodeArt />, dot: "#a6a6b0" },
  { key: "teams", art: <TeamsArt />, dot: "#a8c4a8" },
  { key: "chatgpt", art: <SiOpenai size={78} />, bg: "linear-gradient(#f9fafb, #e6eaf2)", fg: "#2a2e33", dot: "#a8a0a8" },
];

const DOCK_APPS_RECENT = [
  { key: "facetime", art: <FaceTimeArt />, badge: "1", badgeRight: -16 },
  { key: "notes", art: <NotesArt />, dot: "#b08ce8" },
  { key: "postman", art: <PostmanArt />, bg: "#f1784a", dot: "#e0a0f0" },
];

const DockEntry = ({ app, last }) => (
  <DockSlot $last={last}>
    <DockTile $bg={app.bg} $fg={app.fg} $open={app.open}>{app.art}</DockTile>
    {app.dot && <RunDot $color={app.dot} />}
    {app.badge && <DockBadge $right={app.badgeRight}>{app.badge}</DockBadge>}
  </DockSlot>
);

const App = () => {
  return (
    <Screen>
      <GlobalStyle />
      <MenuBar>
        <MenuLeft>
          <AppleIcon />
          <AppName>Postman</AppName>
          <span>File</span>
          <span>Edit</span>
          <span>View</span>
          <span>Window</span>
          <span>Help</span>
        </MenuLeft>
        <MenuRight>
          <DockerBox>
            <SiDocker size={30} />
            <DockerAlert>!</DockerAlert>
          </DockerBox>
          <SiOpenai size={34} style={{ marginLeft: 38 }} />
          <KeyboardBadge>US</KeyboardBadge>
          <TrayIcon width={36} height={26} viewBox="0 0 36 26">
            <path d="M0 1h6v6H0zM0 10h6v6H0zM0 19h6v6H0z" fill="#fff" stroke="none" />
            <rect x="11" y="1.5" width="24" height="23" rx="3" />
          </TrayIcon>
          <TrayIcon width={30} height={30} viewBox="0 0 30 30" $left={36}>
            <circle cx="15" cy="15" r="13" />
            <path d="M12 9l9 6-9 6z" fill="#fff" stroke="none" />
          </TrayIcon>
          <TrayIcon width={52} height={24} viewBox="0 0 52 24" $left={36}>
            <rect x="1" y="1" width="46" height="22" rx="6" stroke="#9a96c0" />
            <rect x="4" y="4" width="40" height="16" rx="3" fill="#eceaf5" stroke="none" />
            <path d="M49 8v8c2 0 3-2 3-4s-1-4-3-4z" fill="#9a96c0" stroke="none" />
          </TrayIcon>
          <TrayIcon width={36} height={26} viewBox="0 0 36 26" $left={36} style={{ strokeWidth: 4 }}>
            <path d="M2 9c10-9 22-9 32 0M8 15c6-5 14-5 20 0" />
            <circle cx="18" cy="22" r="3" fill="#fff" stroke="none" />
          </TrayIcon>
          <TrayIcon width={28} height={28} viewBox="0 0 28 28" $left={38} style={{ strokeWidth: 3 }}>
            <circle cx="12" cy="12" r="9.5" />
            <path d="M19 19l8 8" />
          </TrayIcon>
          <TrayIcon width={30} height={30} viewBox="0 0 30 30" $left={36}>
            <rect x="2" y="2" width="26" height="12" rx="6" fill="none" />
            <circle cx="9" cy="8" r="4" fill="#fff" stroke="none" />
            <rect x="2" y="16" width="26" height="12" rx="6" fill="#fff" stroke="none" />
            <circle cx="21" cy="22" r="4" fill="#2c2270" stroke="none" />
          </TrayIcon>
          <TrayIcon width={28} height={28} viewBox="0 0 28 28" $left={36}>
            <circle cx="14" cy="14" r="14" fill="#50608a" stroke="none" />
            <ellipse cx="9" cy="13" rx="6" ry="9" fill="#c8508a" stroke="none" />
            <ellipse cx="19" cy="16" rx="6" ry="9" fill="#3fb0b0" stroke="none" />
          </TrayIcon>
          <Clock>Fri 4 Oct  19:53</Clock>
        </MenuRight>
      </MenuBar>
      <Strip />
      <AppWindow>
        <TopBar>
          <NavGroup>
            <Light $color="#ee6a5f" />
            <Light $color="#f5bd4f" />
            <Light $color="#61c554" />
            <NavArrow $left={31} $color="#9c9c9c"><ArrowLeft size={30} strokeWidth={1.4} /></NavArrow>
            <NavArrow $left={42} $color="#6a6a6a"><ArrowRight size={30} strokeWidth={1.4} /></NavArrow>
            <NavLink $left={33}>Home</NavLink>
            <NavLink $left={39}>Workspaces <ChevronDown size={28} strokeWidth={1.4} /></NavLink>
            <NavLink $left={45}>API Network <ChevronDown size={28} strokeWidth={1.4} /></NavLink>
          </NavGroup>
          <SearchBox>
            <Search size={34} strokeWidth={1.3} />
            Search Postman
          </SearchBox>
          <TopActions>
            <InviteButton><InviteIcon />Invite</InviteButton>
            <ActionIcon $left={38}><Settings size={34} strokeWidth={1.3} /></ActionIcon>
            <ActionIcon $left={38}><Bell size={32} strokeWidth={1.3} /></ActionIcon>
            <AvatarArt />
            <UpgradeButton>
              <UpgradeLabel>Upgrade</UpgradeLabel>
              <UpgradeCaret><ChevronDown size={28} strokeWidth={1.6} /></UpgradeCaret>
            </UpgradeButton>
          </TopActions>
        </TopBar>
        <Workbench>
          <Sidebar>
            <SidebarHeader>
              <UserIcon />
              <WorkspaceName>My Workspace</WorkspaceName>
              <HeaderButton $width={78}>New</HeaderButton>
              <HeaderButton $width={103}>Import</HeaderButton>
            </SidebarHeader>
            <SidebarBody>
              <Rail>
                <RailItem $active><BucketIcon />Collections</RailItem>
                <RailItem><EnvIcon />Environments</RailItem>
                <RailItem><History size={32} strokeWidth={1.3} />History</RailItem>
                <RailDivider />
                <RailGrid><AddAppIcon /></RailGrid>
              </Rail>
              <TreePanel>
                <TreeTools>
                  <Plus size={30} strokeWidth={1.3} />
                  <FilterBox><FilterIcon /></FilterBox>
                  <MoreDots><MoreDot /><MoreDot /><MoreDot /></MoreDots>
                </TreeTools>
                <CollectionRow>
                  <RowCaret><ChevronRight size={28} strokeWidth={1.6} /></RowCaret>
                  C216-L1-PRATICA-3-Luiza_GES32
                </CollectionRow>
                <CollectionRow>
                  <RowCaret><ChevronDown size={28} strokeWidth={1.6} /></RowCaret>
                  C216-L1-PRATICA-4a-LuizaKinskyMe...
                </CollectionRow>
                <TreeChildren>
                  {REQUESTS.map((req) => (
                    <RequestRow key={req.name} $selected={req.method === "POST"}>
                      <RowMethodSlot>
                        <Method $color={METHOD_COLORS[req.method]}>{req.method}</Method>
                      </RowMethodSlot>
                      {req.name}
                    </RequestRow>
                  ))}
                </TreeChildren>
              </TreePanel>
            </SidebarBody>
          </Sidebar>
          <Main>
            <TabBar>
              {TABS.map((tab) => (
                <Tab key={tab.name + tab.method}>
                  <TabInner>
                    {tab.method && <Method $color={METHOD_COLORS[tab.method]} $dim $size={17}>{tab.method}</Method>}
                    {tab.icon && <span style={{ color: "#8f8f8f" }}><BucketIcon /></span>}
                    <TabText $italic={tab.italic}>{tab.name}</TabText>
                  </TabInner>
                  {tab.dirty && <TabDot />}
                </Tab>
              ))}
              <Tab>
                <TabInner>
                  <ConsoleIcon color="#a0a0a0" />
                  <TabText $active>C216-L1-P</TabText>
                </TabInner>
                <TabUnderline />
              </Tab>
              <TabTool $left={22}><Plus size={36} strokeWidth={1.2} /></TabTool>
              <TabTool $left={37}><ChevronDown size={28} strokeWidth={1.5} /></TabTool>
              <EnvSection>
                <NoEnvIcon />
                <EnvLabel>No environment</EnvLabel>
                <ChevronDown size={28} strokeWidth={1.5} />
                <EnvDivider />
                <CalcIcon />
              </EnvSection>
            </TabBar>
            <Content>
              <TitleRow>
                <ConsoleIcon color="#a8a8a8" />
                <CollectionTitle>C216-L1-PRATICA-4a-LuizaKinskyMendes_32</CollectionTitle>
                <TitleActions>
                  <TitleAction><Check size={28} strokeWidth={1.4} />All requests have tests.</TitleAction>
                  <TitleAction><RunIcon size={26} />Run collection</TitleAction>
                </TitleActions>
              </TitleRow>
              <Description>
                Generate tests for all your request using Postbot. This will require sending the requests in this collection.
              </Description>
              <TestsTable>
                <TableRow $head>
                  <RequestCell $head>Requests</RequestCell>
                  <HeadCell>Tests</HeadCell>
                </TableRow>
                {REQUESTS.map((req) => (
                  <TableRow key={req.name}>
                    <RequestCell>
                      <Method $color={METHOD_COLORS[req.method]}>{req.method}</Method>
                      {req.name}
                    </RequestCell>
                    <TestCell>
                      {req.tests.map((test) => (
                        <TestLine key={test}>
                          <ChevronRight size={34} strokeWidth={1.3} />
                          {test}
                        </TestLine>
                      ))}
                    </TestCell>
                  </TableRow>
                ))}
              </TestsTable>
            </Content>
          </Main>
        </Workbench>
        <StatusBar>
          <StatusGroup $gap={24}>
            <StatusItem style={{ marginRight: 1 }}><PanelIcon /></StatusItem>
            <StatusItem><CircleCheck size={26} strokeWidth={1.5} />Online</StatusItem>
            <StatusItem><Search size={26} strokeWidth={1.5} />Find and replace</StatusItem>
            <StatusItem><ConsoleIcon w={24} h={24} />Console</StatusItem>
          </StatusGroup>
          <StatusGroup $gap={33}>
            <StatusItem $color="#ab9ed8"><PostbotIcon />Postbot</StatusItem>
            <StatusItem><RunIcon size={22} />Runner</StatusItem>
            <StatusItem><ProxyIcon />Start Proxy</StatusItem>
            <StatusItem><Cookie size={26} strokeWidth={1.5} />Cookies</StatusItem>
            <StatusItem><VaultIcon />Vault</StatusItem>
            <StatusItem><Trash2 size={26} strokeWidth={1.5} />Trash</StatusItem>
            <StatusItem><SplitIcon /></StatusItem>
            <StatusItem><CircleHelp size={26} strokeWidth={1.5} /></StatusItem>
          </StatusGroup>
        </StatusBar>
      </AppWindow>
      <Dock>
        {DOCK_APPS.map((app, i) => (
          <DockEntry key={app.key} app={app} last={i === DOCK_APPS.length - 1} />
        ))}
        <DockDivider $left={47} $right={46} />
        {DOCK_APPS_RECENT.map((app, i) => (
          <DockEntry key={app.key} app={app} last={i === DOCK_APPS_RECENT.length - 1} />
        ))}
        <DockDivider $left={48} $right={46} />
        <DockSlot><FileStackArt /></DockSlot>
        <DockSlot $last><TrashArt /></DockSlot>
      </Dock>
    </Screen>
  );
};

export default App;
